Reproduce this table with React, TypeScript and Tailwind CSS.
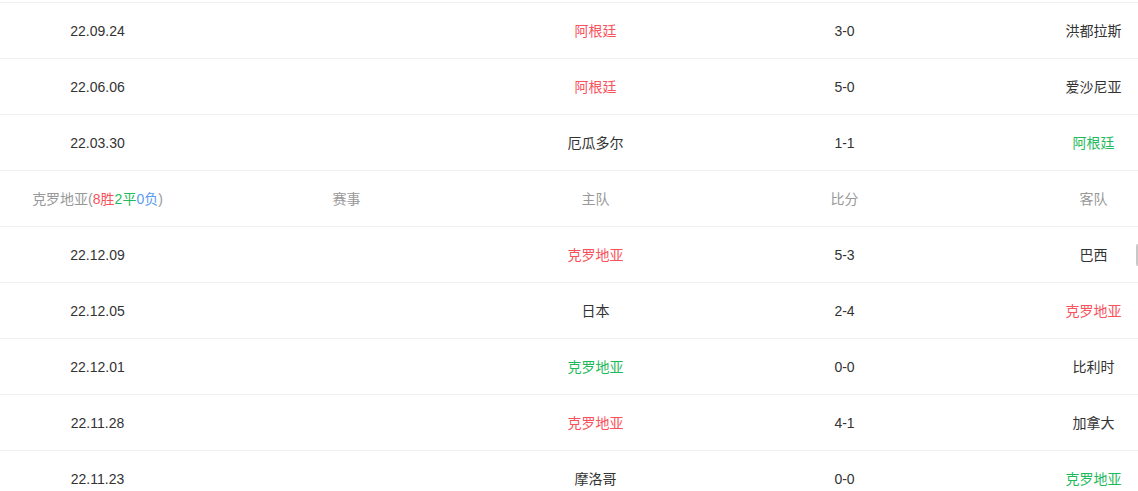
import React from "react";

type Tone = "red" | "green" | "dark";

type Match = {
  date: string;
  home: string;
  homeTone: Tone;
  score: string;
  away: string;
  awayTone: Tone;
};

const toneClass: Record<Tone, string> = {
  red: "text-[#f8525c]",
  green: "text-[#1fba5c]",
  dark: "text-[#333333]",
};

const argentina: Match[] = [
  { date: "22.09.24", home: "阿根廷", homeTone: "red", score: "3-0", away: "洪都拉斯", awayTone: "dark" },
  { date: "22.06.06", home: "阿根廷", homeTone: "red", score: "5-0", away: "爱沙尼亚", awayTone: "dark" },
  { date: "22.03.30", home: "厄瓜多尔", homeTone: "dark", score: "1-1", away: "阿根廷", awayTone: "green" },
];

const croatia: Match[] = [
  { date: "22.12.09", home: "克罗地亚", homeTone: "red", score: "5-3", away: "巴西", awayTone: "dark" },
  { date: "22.12.05", home: "日本", homeTone: "dark", score: "2-4", away: "克罗地亚", awayTone: "red" },
  { date: "22.12.01", home: "克罗地亚", homeTone: "green", score: "0-0", away: "比利时", awayTone: "dark" },
  { date: "22.11.28", home: "克罗地亚", homeTone: "red", score: "4-1", away: "加拿大", awayTone: "dark" },
  { date: "22.11.23", home: "摩洛哥", homeTone: "dark", score: "0-0", away: "克罗地亚", awayTone: "green" },
];

function Row({ m }: { m: Match }) {
  return (
    <div className="flex h-[56px] items-center border-t border-[#f0f0f0] pt-[2px] text-[14px] text-[#333333]">
      <div className="w-[249px] text-center">{m.date}</div>
      <div className="w-[249px] text-center"></div>
      <div className={`w-[249px] text-center ${toneClass[m.homeTone]}`}>{m.home}</div>
      <div className="w-[249px] text-center">{m.score}</div>
      <div className={`w-[249px] text-center ${toneClass[m.awayTone]}`}>{m.away}</div>
    </div>
  );
}

export default function App() {
  return (
    <div
      className="relative h-[491px] w-[1138px] overflow-hidden bg-white pt-[2px]"
      style={{ fontFamily: '"Liberation Sans", "Noto Sans CJK SC", sans-serif' }}
    >
      <div className="ml-[-27px] w-[1245px]">
        {argentina.map((m) => (
          <Row key={m.date} m={m} />
        ))}
        <div className="flex h-[56px] items-center border-t border-[#f0f0f0] pt-[2px] text-[14px] text-[#999999]">
          <div className="w-[249px] text-center">
            克罗地亚(<span className="text-[#f8525c]">8胜</span>
            <span className="text-[#1fba5c]">2平</span>
            <span className="text-[#5b9cf0]">0负</span>)
          </div>
          <div className="w-[249px] text-center">赛事</div>
          <div className="w-[249px] text-center">主队</div>
          <div className="w-[249px] text-center">比分</div>
          <div className="w-[249px] text-center">客队</div>
        </div>
        {croatia.map((m) => (
          <Row key={m.date} m={m} />
        ))}
      </div>
      <div className="absolute right-0 top-[244px] h-[22px] w-[2px] rounded-l bg-[#c8c8c8]" />
    </div>
  );
}
